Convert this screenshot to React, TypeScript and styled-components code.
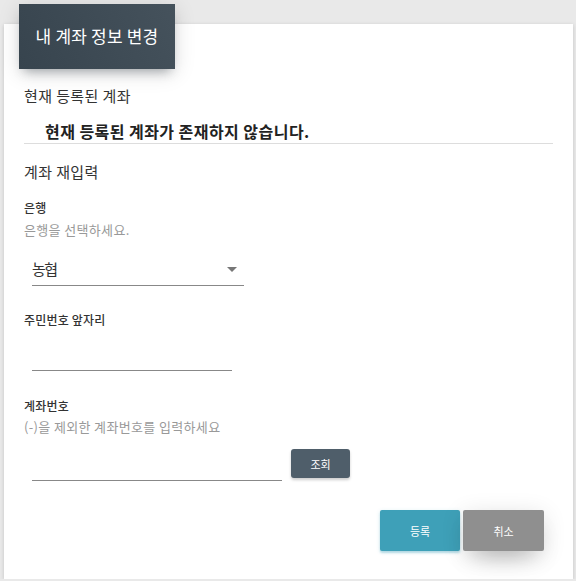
import React from "react";
import styled, { createGlobalStyle } from "styled-components";

const GlobalStyle = createGlobalStyle`
  html, body {
    margin: 0;
    padding: 0;
    background: #e9e9e9;
    font-family: "Noto Sans CJK KR", "Noto Sans", sans-serif;
    color: #333;
  }
  * { box-sizing: border-box; }
`;

const Card = styled.section`
  margin: 24px 0 0 4px;
  width: 569px;
  height: 555px;
  background: #fff;
  box-shadow: 0 1px 4px rgba(0, 0, 0, 0.16);
  padding: 0 20px;
  display: flex;
  flex-direction: column;
`;

const Header = styled.header`
  margin: -20px 0 0 -5px;
  width: 156px;
  height: 65px;
  padding-bottom: 2px;
  background: linear-gradient(60deg, #37444e, #45525c);
  box-shadow: 0 4px 20px rgba(0, 0, 0, 0.14), 0 7px 10px -5px rgba(55, 68, 78, 0.4);
  display: flex;
  align-items: center;
  justify-content: center;
  color: #fff;
  font-size: 17px;
  letter-spacing: 0.2px;
`;

const SectionTitle = styled.h3<{ $top: number }>`
  margin: ${(p) => p.$top}px 0 0;
  font-size: 15px;
  font-weight: 400;
  line-height: 20px;
  letter-spacing: 0.4px;
  color: #333;
`;

const Notice = styled.div`
  margin-top: 14px;
  padding: 0 0 1px 21px;
  border-bottom: 1px solid #ddd;
  font-size: 16px;
  font-weight: 700;
  line-height: 22px;
  letter-spacing: 0.45px;
  color: #222;
`;

const Label = styled.label<{ $top: number }>`
  display: block;
  margin-top: ${(p) => p.$top}px;
  font-size: 12px;
  font-weight: 500;
  line-height: 16px;
  letter-spacing: 0.2px;
  color: #333;
`;

const Hint = styled.p<{ $top: number }>`
  margin: ${(p) => p.$top}px 0 0;
  font-size: 13px;
  line-height: 18px;
  letter-spacing: 0.35px;
  color: #999;
`;

const Select = styled.div`
  position: relative;
  margin: 19px 0 0 8px;
  width: 212px;
  height: 28px;
  border-bottom: 1px solid #888;
  font-size: 15px;
  line-height: 22px;
  letter-spacing: -1.5px;
  color: #333;
`;

const Caret = styled.span`
  position: absolute;
  right: 7px;
  top: 9px;
  width: 0;
  height: 0;
  border-left: 5px solid transparent;
  border-right: 5px solid transparent;
  border-top: 5px solid #777;
`;

const Input = styled.input<{ $width: number; $top: number }>`
  display: block;
  margin: ${(p) => p.$top}px 0 0 8px;
  width: ${(p) => p.$width}px;
  height: 30px;
  border: none;
  border-bottom: 1px solid #888;
  outline: none;
  background: transparent;
  font-family: inherit;
  font-size: 14px;
`;

const Row = styled.div`
  display: flex;
  align-items: flex-start;
  margin-top: 13px;
`;

const SmallButton = styled.button`
  margin-left: 9px;
  width: 59px;
  height: 29px;
  border: none;
  border-radius: 3px;
  background: #4f5e6a;
  color: #fff;
  font-family: inherit;
  font-size: 11px;
  letter-spacing: 0;
  box-shadow: 0 2px 3px rgba(0, 0, 0, 0.2);
`;

const Actions = styled.div`
  display: flex;
  justify-content: flex-end;
  gap: 3px;
  margin: 29px 9px 0 0;
`;

const ActionButton = styled.button<{ $tone: "primary" | "muted" }>`
  width: ${(p) => (p.$tone === "primary" ? 80 : 81)}px;
  height: 41px;
  border: none;
  border-radius: 2px;
  background: ${(p) => (p.$tone === "primary" ? "#3ea0b8" : "#8f8f8f")};
  color: #fff;
  font-family: inherit;
  font-size: 11px;
  letter-spacing: 0;
  box-shadow: ${(p) =>
    p.$tone === "primary"
      ? "0 2px 2px rgba(62, 160, 184, 0.3), 0 1px 4px rgba(62, 160, 184, 0.2)"
      : "0 14px 26px -12px rgba(0, 0, 0, 0.35), 0 4px 23px rgba(0, 0, 0, 0.12)"};
`;

export default function App() {
  return (
    <>
      <GlobalStyle />
      <Card>
        <Header>내 계좌 정보 변경</Header>
        <SectionTitle $top={17}>현재 등록된 계좌</SectionTitle>
        <Notice>현재 등록된 계좌가 존재하지 않습니다.</Notice>

        <SectionTitle $top={18}>계좌 재입력</SectionTitle>
        <Label $top={18}>은행</Label>
        <Hint $top={5}>은행을 선택하세요.</Hint>
        <Select>
          농협
          <Caret />
        </Select>

        <Label $top={26}>주민번호 앞자리</Label>
        <Input $width={200} $top={13} />

        <Label $top={27}>계좌번호</Label>
        <Hint $top={4}>(-)을 제외한 계좌번호를 입력하세요</Hint>
        <Row>
          <Input $width={250} $top={2} />
          <SmallButton>조회</SmallButton>
        </Row>

        <Actions>
          <ActionButton $tone="primary">등록</ActionButton>
          <ActionButton $tone="muted">취소</ActionButton>
        </Actions>
      </Card>
    </>
  );
}
